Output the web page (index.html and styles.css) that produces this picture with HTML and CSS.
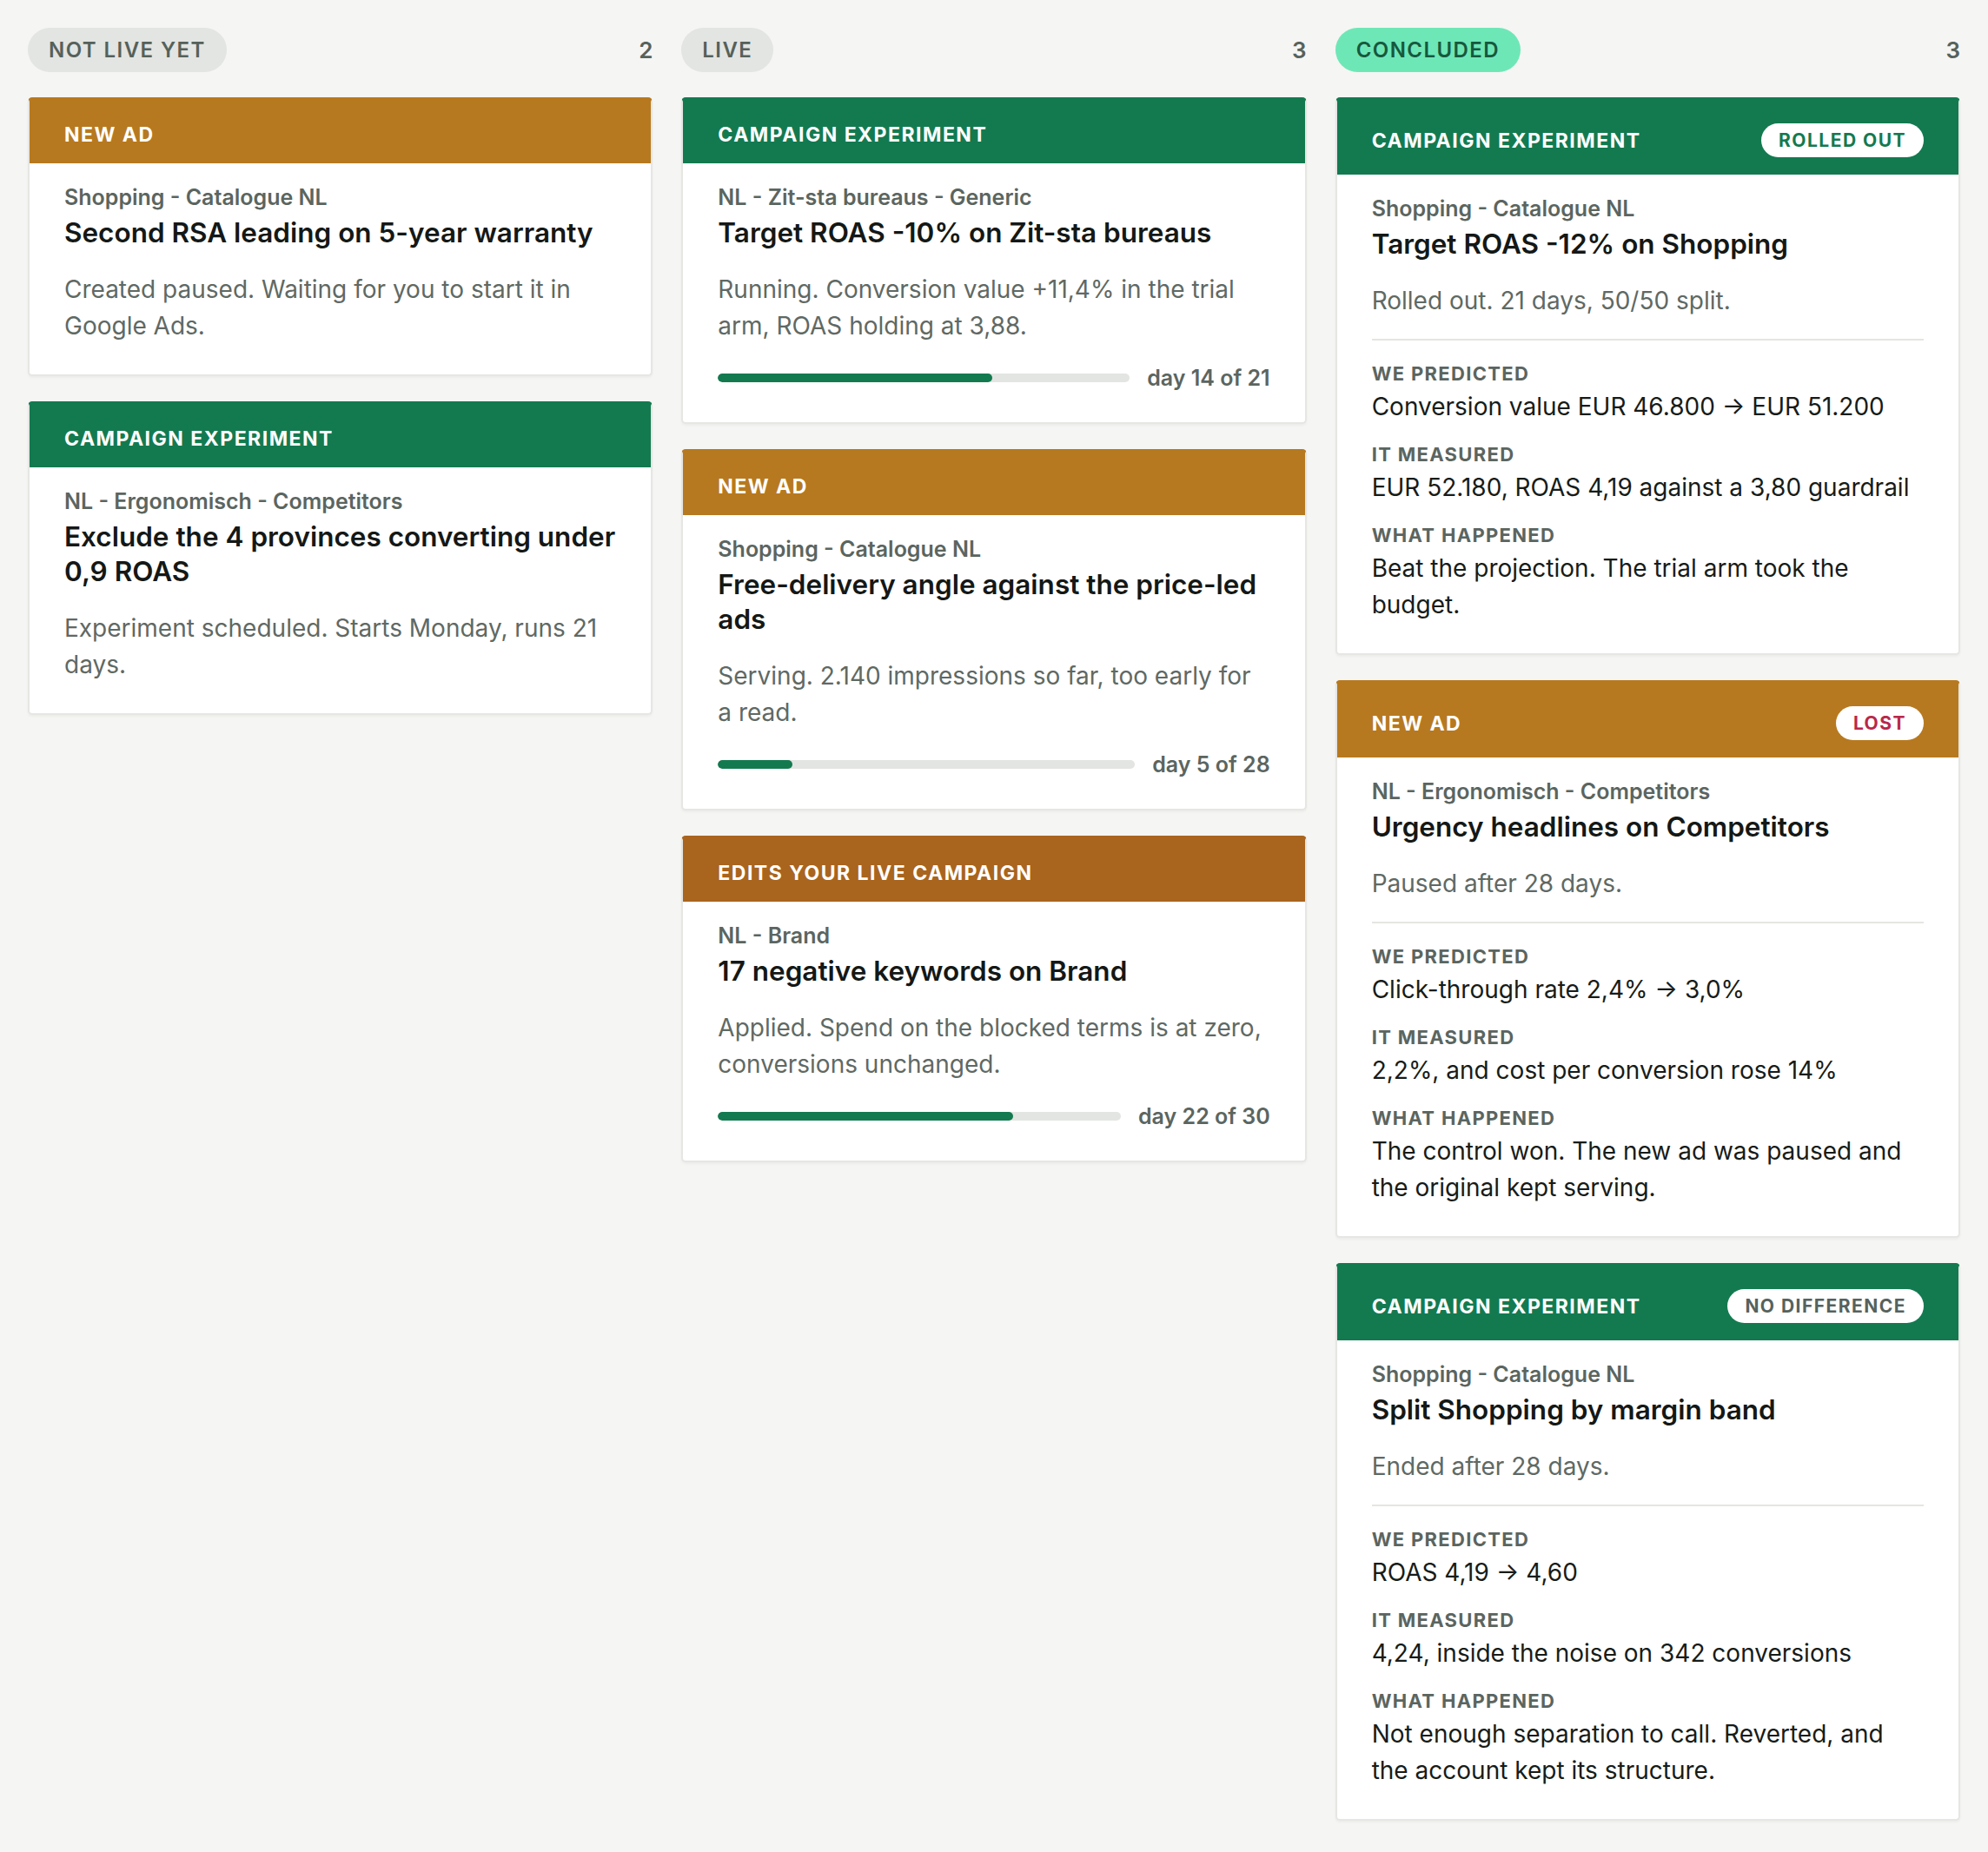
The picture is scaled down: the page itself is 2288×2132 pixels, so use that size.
FILE: index.html
```html
<!DOCTYPE html>
<html lang="en">
<head>
    <meta charset="UTF-8">
    <meta name="viewport" content="width=device-width, initial-scale=1.0">
    <title>Experiments board</title>
    <link rel="stylesheet" href="styles.css">
</head>
<body>
    <main class="board">
        <!-- Not live yet -->
        <section class="column">
            <header class="column-head">
                <span class="stage stage-muted">Not live yet</span>
                <span class="count">2</span>
            </header>
            <div class="cards">
                <article class="card card-ad">
                    <div class="card-type"><span>New ad</span></div>
                    <div class="card-body">
                        <p class="campaign">Shopping - Catalogue NL</p>
                        <h3 class="card-title">Second RSA leading on 5-year warranty</h3>
                        <p class="status">Created paused. Waiting for you to start it in Google Ads.</p>
                    </div>
                </article>
                <article class="card card-experiment">
                    <div class="card-type"><span>Campaign experiment</span></div>
                    <div class="card-body">
                        <p class="campaign">NL - Ergonomisch - Competitors</p>
                        <h3 class="card-title">Exclude the 4 provinces converting under 0,9 ROAS</h3>
                        <p class="status">Experiment scheduled. Starts Monday, runs 21 days.</p>
                    </div>
                </article>
            </div>
        </section>

        <!-- Live -->
        <section class="column">
            <header class="column-head">
                <span class="stage stage-muted">Live</span>
                <span class="count">3</span>
            </header>
            <div class="cards">
                <article class="card card-experiment">
                    <div class="card-type"><span>Campaign experiment</span></div>
                    <div class="card-body">
                        <p class="campaign">NL - Zit-sta bureaus - Generic</p>
                        <h3 class="card-title">Target ROAS -10% on Zit-sta bureaus</h3>
                        <p class="status">Running. Conversion value +11,4% in the trial arm, ROAS holding at 3,88.</p>
                        <div class="progress">
                            <div class="track"><div class="fill" style="width: 66.67%"></div></div>
                            <span class="progress-label">day 14 of 21</span>
                        </div>
                    </div>
                </article>
                <article class="card card-ad">
                    <div class="card-type"><span>New ad</span></div>
                    <div class="card-body">
                        <p class="campaign">Shopping - Catalogue NL</p>
                        <h3 class="card-title">Free-delivery angle against the price-led ads</h3>
                        <p class="status">Serving. 2.140 impressions so far, too early for a read.</p>
                        <div class="progress">
                            <div class="track"><div class="fill" style="width: 17.86%"></div></div>
                            <span class="progress-label">day 5 of 28</span>
                        </div>
                    </div>
                </article>
                <article class="card card-edit">
                    <div class="card-type"><span>Edits your live campaign</span></div>
                    <div class="card-body">
                        <p class="campaign">NL - Brand</p>
                        <h3 class="card-title">17 negative keywords on Brand</h3>
                        <p class="status">Applied. Spend on the blocked terms is at zero, conversions unchanged.</p>
                        <div class="progress">
                            <div class="track"><div class="fill" style="width: 73.33%"></div></div>
                            <span class="progress-label">day 22 of 30</span>
                        </div>
                    </div>
                </article>
            </div>
        </section>

        <!-- Concluded -->
        <section class="column">
            <header class="column-head">
                <span class="stage stage-done">Concluded</span>
                <span class="count">3</span>
            </header>
            <div class="cards">
                <article class="card card-experiment">
                    <div class="card-type">
                        <span>Campaign experiment</span>
                        <span class="outcome outcome-win">Rolled out</span>
                    </div>
                    <div class="card-body">
                        <p class="campaign">Shopping - Catalogue NL</p>
                        <h3 class="card-title">Target ROAS -12% on Shopping</h3>
                        <p class="status">Rolled out. 21 days, 50/50 split.</p>
                        <dl class="result">
                            <dt>We predicted</dt>
                            <dd>Conversion value EUR 46.800 → EUR 51.200</dd>
                            <dt>It measured</dt>
                            <dd>EUR 52.180, ROAS 4,19 against a 3,80 guardrail</dd>
                            <dt>What happened</dt>
                            <dd>Beat the projection. The trial arm took the budget.</dd>
                        </dl>
                    </div>
                </article>
                <article class="card card-ad">
                    <div class="card-type">
                        <span>New ad</span>
                        <span class="outcome outcome-lost">Lost</span>
                    </div>
                    <div class="card-body">
                        <p class="campaign">NL - Ergonomisch - Competitors</p>
                        <h3 class="card-title">Urgency headlines on Competitors</h3>
                        <p class="status">Paused after 28 days.</p>
                        <dl class="result">
                            <dt>We predicted</dt>
                            <dd>Click-through rate 2,4% → 3,0%</dd>
                            <dt>It measured</dt>
                            <dd>2,2%, and cost per conversion rose 14%</dd>
                            <dt>What happened</dt>
                            <dd>The control won. The new ad was paused and the original kept serving.</dd>
                        </dl>
                    </div>
                </article>
                <article class="card card-experiment">
                    <div class="card-type">
                        <span>Campaign experiment</span>
                        <span class="outcome outcome-flat">No difference</span>
                    </div>
                    <div class="card-body">
                        <p class="campaign">Shopping - Catalogue NL</p>
                        <h3 class="card-title">Split Shopping by margin band</h3>
                        <p class="status">Ended after 28 days.</p>
                        <dl class="result">
                            <dt>We predicted</dt>
                            <dd>ROAS 4,19 → 4,60</dd>
                            <dt>It measured</dt>
                            <dd>4,24, inside the noise on 342 conversions</dd>
                            <dt>What happened</dt>
                            <dd>Not enough separation to call. Reverted, and the account kept its structure.</dd>
                        </dl>
                    </div>
                </article>
            </div>
        </section>
    </main>
</body>
</html>
```

FILE: styles.css
```css
body {
    margin: 0;
    font-family: Inter, "Noto Sans", sans-serif;
    background-color: #f5f5f3;
    color: #151a17;
}

.board {
    display: grid;
    grid-template-columns: repeat(3, 1fr);
    column-gap: 33px;
    align-items: start;
    padding: 32px 32px 40px;
}

.column-head {
    display: flex;
    justify-content: space-between;
    align-items: center;
    height: 51px;
    margin-bottom: 29px;
}

.stage {
    display: inline-flex;
    align-items: center;
    height: 51px;
    padding: 0 24px;
    border-radius: 26px;
    font-size: 24px;
    font-weight: 600;
    letter-spacing: 0.06em;
    text-transform: uppercase;
}

.stage-muted {
    background-color: #e3e5e2;
    color: #55615b;
}

.stage-done {
    background-color: #6ee7b7;
    color: #17583d;
}

.count {
    font-size: 26px;
    font-weight: 600;
    color: #56625c;
}

.cards {
    display: flex;
    flex-direction: column;
    gap: 29px;
}

/* card: coloured top border runs into the type bar */
.card {
    background-color: #fff;
    border: 2px solid #e6e6e3;
    border-top: 6px solid;
    border-radius: 5px;
    box-shadow: 0 2px 3px rgba(0, 0, 0, 0.04);
    overflow: hidden;
}

.card-ad { border-top-color: #b7791f; }
.card-ad .card-type { background-color: #b7791f; }

.card-experiment { border-top-color: #137a50; }
.card-experiment .card-type { background-color: #137a50; }

.card-edit { border-top-color: #a9641e; }
.card-edit .card-type { background-color: #a9641e; }

.card-type {
    display: flex;
    justify-content: space-between;
    align-items: center;
    padding: 24px 40px 20px;
    color: #fff;
    font-size: 23px;
    line-height: 26px;
    font-weight: 700;
    letter-spacing: 0.065em;
    text-transform: uppercase;
}

.outcome {
    display: inline-flex;
    align-items: center;
    height: 39px;
    padding: 0 20px;
    border-radius: 20px;
    background-color: #fff;
    font-size: 21px;
    font-weight: 700;
    letter-spacing: 0.07em;
}

.outcome-win { color: #137a50; }
.outcome-lost { color: #b8284a; }
.outcome-flat { color: #56625c; }

.card-body {
    padding: 23px 40px 35px;
}

.campaign {
    margin: 0;
    font-size: 25px;
    line-height: 32px;
    font-weight: 600;
    color: #5b6560;
}

.card-title {
    margin: 5px 0 0;
    font-size: 31.5px;
    line-height: 40px;
    font-weight: 600;
    color: #141816;
}

.status {
    margin: 24px 0 0;
    font-size: 28px;
    line-height: 42px;
    color: #5f6964;
}

.progress {
    display: flex;
    align-items: center;
    gap: 20px;
    margin-top: 23px;
}

.track {
    flex-grow: 1;
    height: 10px;
    border-radius: 5px;
    background-color: #e3e5e2;
    overflow: hidden;
}

.fill {
    height: 100%;
    border-radius: 5px;
    background-color: #137a50;
}

.progress-label {
    font-size: 25px;
    line-height: 32px;
    font-weight: 600;
    color: #5b6560;
}

.result {
    margin: 23px 0 0;
    padding-top: 23px;
    border-top: 2px solid #e5e5e2;
}

.result dt {
    font-size: 22px;
    line-height: 30px;
    font-weight: 700;
    letter-spacing: 0.06em;
    text-transform: uppercase;
    color: #5b6560;
}

.result dd {
    margin: 2px 0 19px;
    font-size: 28px;
    line-height: 42px;
    color: #171c19;
}

.result dd:last-child {
    margin-bottom: 0;
}
```
